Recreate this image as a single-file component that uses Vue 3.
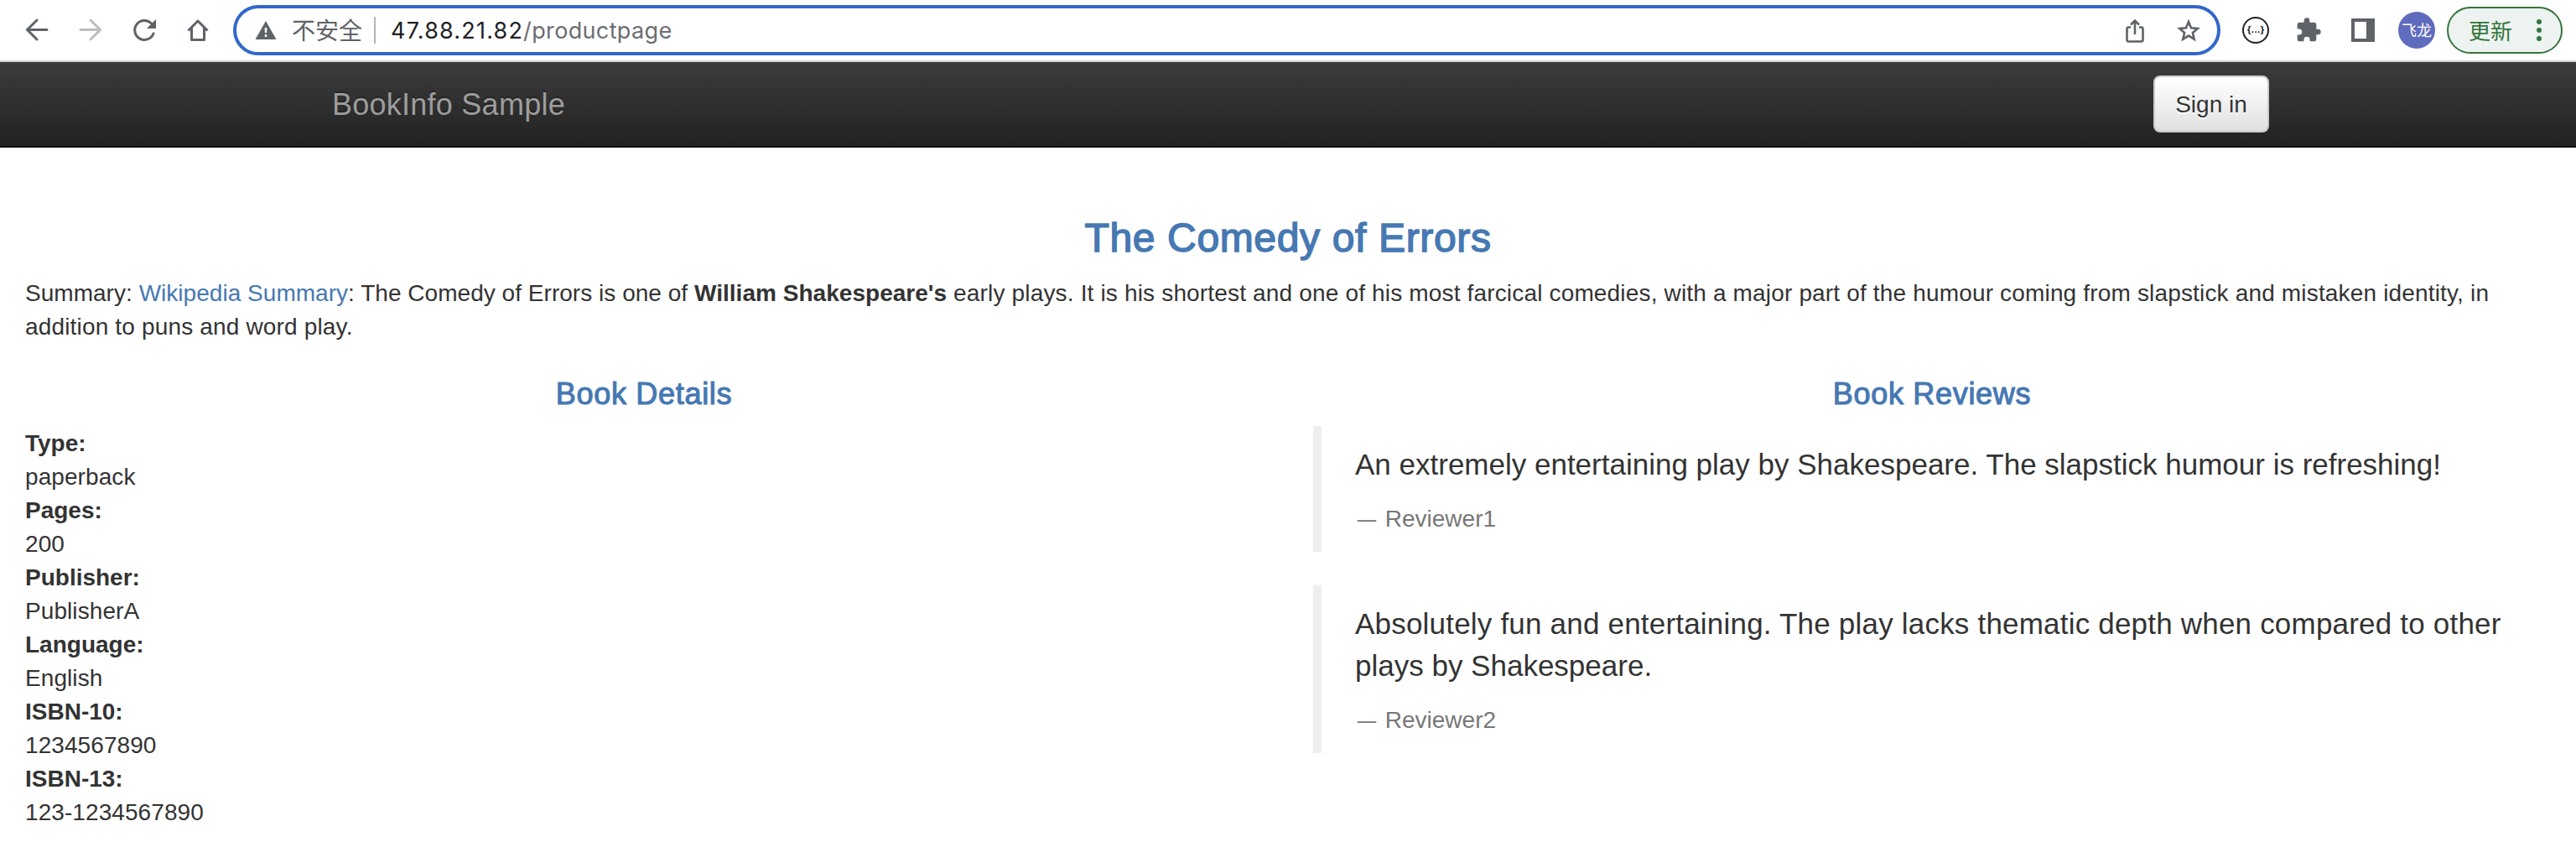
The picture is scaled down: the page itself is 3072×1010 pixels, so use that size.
<script setup>
const details = [
  ['Type:', 'paperback'],
  ['Pages:', '200'],
  ['Publisher:', 'PublisherA'],
  ['Language:', 'English'],
  ['ISBN-10:', '1234567890'],
  ['ISBN-13:', '123-1234567890'],
]
const reviews = [
  { lines: ['An extremely entertaining play by Shakespeare. The slapstick humour is refreshing!'], by: 'Reviewer1' },
  { lines: ['Absolutely fun and entertaining. The play lacks thematic depth when compared to other', 'plays by Shakespeare.'], by: 'Reviewer2' },
]
</script>

<template>
  <div class="page">
    <header class="toolbar">
      <svg class="nav-icons" width="260" height="72" viewBox="10 0 260 72" fill="none" stroke="#5f6368" stroke-width="3">
        <path d="M56 35.500H32.500M44 24L32.500 35.500L44 47" stroke-linecap="round" />
        <path d="M96 35.500H119.500M108 24L119.500 35.500L108 47" stroke="#bbbdbf" stroke-linecap="round" />
        <path d="M183 40A11.500 11.500 0 1 1 180 27.500L183 30.500" stroke-linecap="round" />
        <path d="M186 23V34H175Z" fill="#5f6368" stroke="none" />
        <path d="M224.500 36.500L236 25L247.500 36.500M228.500 33V47.500H243.500V33" stroke-linejoin="round" />
      </svg>
      <div class="omnibox">
        <svg class="warn" width="26" height="24" viewBox="0 0 26 24"><path d="M13 1L25.500 23H.5Z" fill="#5f6368" /><path d="M13 9v6M13 17v3" stroke="#fff" stroke-width="2.400" /></svg>
        <span class="insecure">不安全</span>
        <span class="divider"></span>
        <span class="url"><span class="host">47.88.21.82</span>/productpage</span>
        <svg class="box-icons" width="106" height="60" viewBox="2534 6 106 60" fill="none" stroke="#5f6368" stroke-width="2.600">
          <path d="M2541 32.500H2538.500Q2536.500 32.500 2536.500 34.500V47.500Q2536.500 49.500 2538.500 49.500H2553.500Q2555.500 49.500 2555.500 47.500V34.500Q2555.500 32.500 2553.500 32.500H2551M2546 41V25M2541 29.500L2546 24.500L2551 29.500" />
          <path d="M2610 26L2613 33.200L2620.800 33.900L2614.900 39L2616.700 46.700L2610 42.600L2603.300 46.700L2605.100 39L2599.200 33.900L2607 33.200Z" />
        </svg>
      </div>
      <div class="actions">
        <span class="json"><span>{</span><span class="dots">...</span><span>}</span></span>
        <svg class="puzzle" width="32" height="32" viewBox="0 0 24 24"><path fill="#5f6368" d="M20.500 11H19V7c0-1.100-.9-2-2-2h-4V3.500a2.500 2.500 0 0 0-5 0V5H4c-1.100 0-2 .9-2 2v3.800h1.500a2.700 2.700 0 0 1 0 5.400H2V20c0 1.100.9 2 2 2h3.800v-1.500a2.700 2.700 0 0 1 5.400 0V22H17c1.100 0 2-.9 2-2v-4h1.500a2.500 2.500 0 0 0 0-5z" /></svg>
        <span class="panel"></span>
        <span class="avatar">飞龙</span>
        <span class="update">更新<svg width="6" height="26" viewBox="0 0 6 26" fill="#34753d"><circle cx="3" cy="3" r="3" /><circle cx="3" cy="13" r="3" /><circle cx="3" cy="23" r="3" /></svg></span>
      </div>
    </header>
    <nav class="navbar"><span class="brand">BookInfo Sample</span><button class="signin">Sign in</button></nav>
    <main class="content">
      <h3>The Comedy of Errors</h3>
      <p class="summary">Summary: <a>Wikipedia Summary</a>: The Comedy of Errors is one of <b>William Shakespeare's</b><span class="rest"> early plays. It is his shortest and one of his most farcical comedies, with a major part of the humour coming from slapstick and mistaken identity, in<br />addition to puns and word play.</span></p>
      <div class="row">
        <section class="col">
          <h4>Book Details</h4>
          <dl><template v-for="[k, v] in details" :key="k"><dt>{{ k }}</dt><dd>{{ v }}</dd></template></dl>
        </section>
        <section class="col">
          <h4>Book Reviews</h4>
          <blockquote v-for="r in reviews" :key="r.by">
            <p :class="{ wide: r.lines.length > 1 }"><span v-for="l in r.lines" :key="l" class="line">{{ l }}</span></p>
            <small><span class="dash">—</span> {{ r.by }}</small>
          </blockquote>
        </section>
      </div>
    </main>
  </div>
</template>

<style>
body { background: #fff; }
</style>
<style scoped>
* { box-sizing: border-box; }
.page { width: 3072px; height: 1010px; overflow: hidden; font: 28px/40px "Liberation Sans", Arial, sans-serif; color: #333; }
.toolbar { display: flex; height: 74px; border-bottom: 2px solid #d4d4d4; padding: 0 16px 0 10px; }
.nav-icons { flex: none; }
.omnibox { flex: none; margin-top: 6px; margin-left: 8px; width: 2370px; height: 60px; border: 4px solid #3367c9; border-radius: 30px; display: flex; align-items: center; }
.warn { margin-left: 22px; }
.insecure { margin-left: 18px; font: 28px/40px "Noto Sans CJK SC", sans-serif; color: #5f6368; padding-bottom: 2px; }
.divider { width: 2px; height: 32px; background: #b5b5b5; margin: 0 18px 0 14px; }
.url { font: 27px/40px Inter, sans-serif; color: #6b6e72; letter-spacing: .35px; padding-top: 1px; }
.host { color: #202124; letter-spacing: 1.2px; }
.box-icons { margin-left: auto; margin-right: 4px; }
.actions { display: flex; align-items: center; height: 72px; }
.json { width: 32px; height: 32px; margin-left: 26px; border: 2px solid #222; border-radius: 50%; font: bold 11px/26px "Liberation Sans", sans-serif; color: #111; display: flex; justify-content: center; }
.dots { letter-spacing: .6px; padding-left: .6px; }
.puzzle { margin-left: 31px; margin-bottom: 1px; }
.panel { width: 28px; height: 28px; margin-left: 35px; border: 4px solid #5f6368; border-right-width: 10px; }
.avatar { width: 44px; height: 44px; margin-left: 28px; border-radius: 50%; background: #5f6bbd; color: #fff; font: 18px/43px "Noto Sans CJK SC", sans-serif; text-align: center; white-space: nowrap; }
.update { width: 138px; height: 56px; margin-left: 14px; border: 2px solid #34753d; border-radius: 28px; background: #edf3f0; color: #34753d; font: 26px/40px "Noto Sans CJK SC", sans-serif; display: flex; align-items: center; justify-content: space-between; padding: 0 23px 0 24px; }
.navbar { display: flex; justify-content: space-between; align-items: center; height: 102px; padding: 0 366px 0 396px; background: linear-gradient(#3c3c3c, #222); border-bottom: 2px solid #080808; }
.brand { font-size: 36px; color: #9d9d9d; letter-spacing: .25px; padding-top: 2px; text-shadow: 0 -2px 0 rgba(0, 0, 0, .25); }
.signin { font: 28px "Liberation Sans", sans-serif; color: #333; width: 138px; height: 68px; padding: 2px 0 0; border: 2px solid #ccc; border-radius: 8px; background: linear-gradient(#fff, #e0e0e0); text-shadow: 0 2px 0 #fff; }
.content { padding: 82px 30px 0; }
h3, h4 { margin: 0; text-align: center; font-weight: 400; color: #4678b2; }
h3 { font-size: 48px; line-height: 52px; margin-bottom: 19px; letter-spacing: .65px; -webkit-text-stroke: 1.5px #4678b2; }
h4 { font-size: 36px; line-height: 40px; margin: 21px 0 19px; letter-spacing: .7px; -webkit-text-stroke: 1.1px #4678b2; }
.summary { margin: 0 0 20px; padding-top: 1px; white-space: nowrap; letter-spacing: .03px; }
.rest { letter-spacing: .165px; }
a { color: #4678b2; }
.row { display: flex; gap: 60px; margin-top: -1px; }
.col { flex: 1; }
.col + .col h4 { margin-bottom: 18px; }
dl, dd { margin: 0; }
dt { font-weight: 700; }
dd { letter-spacing: .08px; }
blockquote { margin: 0 0 40px; padding: 21px 40px 19px; border-left: 10px solid #eee; font-size: 35px; line-height: 50px; }
blockquote p { margin: 0 0 20px; }
.wide { letter-spacing: .2px; }
.wide .line + .line { letter-spacing: 0; }
.line { display: block; white-space: nowrap; }
small { font-size: 28px; color: #777; display: block; line-height: 40px; }
.dash { display: inline-block; transform: scaleX(.8); }
</style>
